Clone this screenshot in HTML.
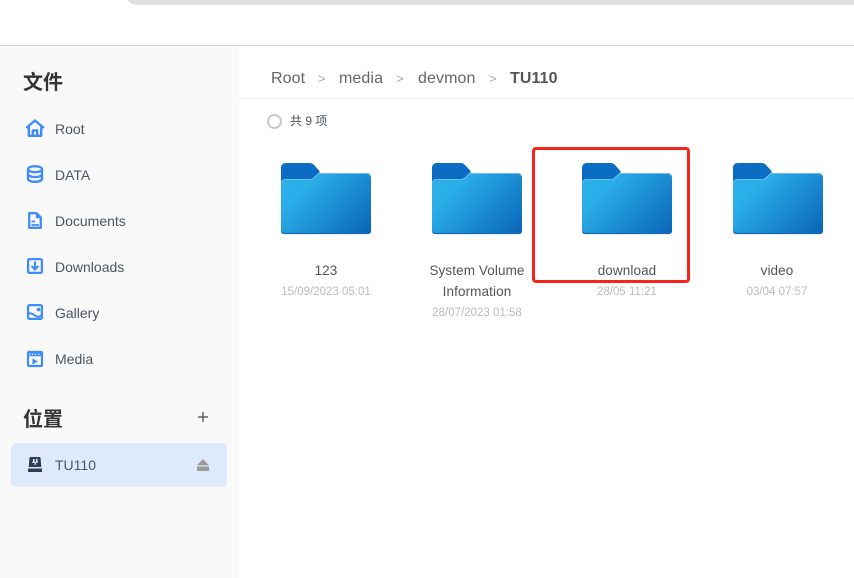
<!DOCTYPE html>
<html lang="zh">
<head>
<meta charset="utf-8">
<title>文件</title>
<style>
html,body{margin:0;padding:0;background:#fff}
body{width:854px;height:578px;overflow:hidden;position:relative;font-family:"Liberation Sans","Noto Sans CJK SC",sans-serif}
.a{position:absolute;white-space:nowrap}
.side{position:absolute;left:0;top:46px;width:239px;height:532px;background:#f9f9f9}
.h{font-size:20px;font-weight:700;color:#333;font-family:"Noto Sans CJK SC",sans-serif;line-height:26px;left:23px}
.nav{left:55px;font-size:14px;color:#4b5563;line-height:18px}
.ic{position:absolute;left:25px;width:20px;height:20px}
.bc{font-size:16px;letter-spacing:.1px;color:#666;line-height:20px;top:69px}
.sep{font-size:13px;color:#aaa;line-height:20px;top:69px}
.n{font-size:13.500px;letter-spacing:.1px;color:#555;line-height:21px;text-align:center;width:150px}
.t{font-size:11.500px;color:#bbb;line-height:16px;text-align:center;width:150px}
.f{position:absolute;top:163px;width:92px;height:72px}
</style>
</head>
<body>
<svg width="0" height="0" style="position:absolute">
<defs>
<linearGradient id="g" gradientUnits="userSpaceOnUse" x1="15" y1="32" x2="76" y2="92">
<stop offset="0" stop-color="#2bafe9"/><stop offset="1" stop-color="#0761b5"/>
</linearGradient>
<symbol id="folder" viewBox="0 0 92 72">
<path d="M1 4.500a4.500 4.500 0 0 1 4.500-4.500h24a6 6 0 0 1 4.500 2L39.500 8v11H1z" fill="#0a6cc2"/>
<path d="M39 10h48a4 4 0 0 1 4 4v54a3 3 0 0 1-3 3H4a3 3 0 0 1-3-3V20a4 4 0 0 1 4-4h25q2 0 3.500-1.300L37 11.500q1-1.500 2-1.500z" fill="url(#g)"/>
<path d="M1.500 20a4 4 0 0 1 3.500-3.500h25q2 0 3.500-1.300L37 12q1-1.500 2-1.500h48a4 4 0 0 1 3.500 3" fill="none" stroke="#6dbdec" stroke-width="1"/>
<path d="M1.500 68.500q.5 2 3 2h83q2.500 0 3-2" fill="none" stroke="#1468b8" stroke-width="1.200"/>
</symbol>
</defs>
</svg>

<!-- top -->
<div class="a" style="left:124px;top:-30px;width:760px;height:35px;background:#e0e0e0;border-radius:0 0 0 14px"></div>
<div class="a" style="left:0;top:45px;width:854px;height:1px;background:#d4d4d4"></div>

<div class="side"></div>
<div class="a h" style="top:68px">文件</div>

<svg class="ic" style="top:119px" viewBox="0 0 20 20" fill="none" stroke="#3f8cff" stroke-width="2.400" stroke-linejoin="round"><path d="M2 8.300 10 1.500l8 6.800h-1.800v8.500H3.800V8.300z"/><path d="M7.800 17v-5.500h4.400V17"/></svg>
<div class="a nav" style="top:120px">Root</div>

<svg class="ic" style="top:165px" viewBox="0 0 20 20" fill="none" stroke="#3f8cff" stroke-width="2.300"><ellipse cx="10" cy="4.200" rx="7" ry="3"/><path d="M3 4.200v9.600c0 1.700 3 3 7 3s7-1.300 7-3V4.200M3 9c0 1.700 3 3 7 3s7-1.300 7-3"/><path d="M3 13.800c0 1.700 3 3 7 3s7-1.300 7-3"/></svg>
<div class="a nav" style="top:166px">DATA</div>

<svg class="ic" style="top:211px" viewBox="0 0 20 20" fill="none" stroke="#3f8cff" stroke-width="2.300" stroke-linejoin="round"><path d="M4.200 2.200h7.300l4.300 4.300v10.300H4.200z"/><path d="M11.500 2v4.500H16" fill="#3f8cff" stroke-width="1.200"/><path d="M6.500 10.500h3.500M6.500 14h7.500" stroke-width="1.800"/></svg>
<div class="a nav" style="top:212px">Documents</div>

<svg class="ic" style="top:256px" viewBox="0 0 20 20" fill="none" stroke="#3f8cff" stroke-width="2.300"><rect x="3.100" y="3.100" width="13.800" height="13.800" rx="1.500"/><path d="M10 5.500v8M6.500 10l3.500 3.500 3.500-3.500" stroke-width="2.100"/></svg>
<div class="a nav" style="top:258px">Downloads</div>

<svg class="ic" style="top:302px" viewBox="0 0 20 20" fill="none" stroke="#3f8cff" stroke-width="2.300"><rect x="3.100" y="3.100" width="13.800" height="13.800" rx="1.500"/><path d="M3 12c3-1.500 5 0 7.500 1.800s4 1 6.500-.8" stroke-width="2"/><circle cx="13.500" cy="7.500" r="1.800" fill="#3f8cff" stroke="none"/></svg>
<div class="a nav" style="top:304px">Gallery</div>

<svg class="ic" style="top:349px" viewBox="0 0 20 20" fill="none" stroke="#3f8cff" stroke-width="2.200"><rect x="3" y="3" width="14" height="14" rx="1"/><path d="M2.500 5.500h15" stroke-width="3.400"/><path d="M4 5.300h12" stroke="#fff" stroke-width="1.100" stroke-dasharray="1.300 1.700"/><path d="M7.500 9.500v6l5.500-3z" fill="#3f8cff" stroke="none"/></svg>
<div class="a nav" style="top:350px">Media</div>

<div class="a h" style="top:405px">位置</div>
<svg class="a" style="left:197px;top:411px" width="12" height="12" viewBox="0 0 12 12"><path d="M6 1v10M1 6h10" stroke="#444" stroke-width="1.200"/></svg>

<div class="a" style="left:11px;top:443px;width:216px;height:44px;background:#deeafb;border-radius:5px"></div>
<svg class="a" style="left:27px;top:456px" width="16" height="16" viewBox="0 0 16 16"><path d="M2.500 2a1 1 0 0 1 1-1h9a1 1 0 0 1 1 1l.8 9H1.700z" fill="#2d3d55"/><path d="M6 3h1.500v3H6zM9 2.800h1.500V6H9zM5 5.800h6v1H5zM7.500 6.500h1.200v2.500H7.500z" fill="#e4edfb"/><path d="M1 12.500h14V16H1z" fill="#2d3d55"/></svg>
<div class="a nav" style="top:456px">TU110</div>
<svg class="a" style="left:197px;top:459px" width="12" height="12" viewBox="0 0 12 12"><path d="M6 0 12 6.300H0z" fill="#9a9a9a"/><rect x="0" y="7.500" width="12" height="4.500" rx=".5" fill="#9a9a9a"/></svg>

<!-- breadcrumb -->
<div class="a bc" style="left:271px">Root</div>
<div class="a sep" style="left:318px">&gt;</div>
<div class="a bc" style="left:339px">media</div>
<div class="a sep" style="left:396px">&gt;</div>
<div class="a bc" style="left:418px">devmon</div>
<div class="a sep" style="left:489px">&gt;</div>
<div class="a bc" style="left:510px;font-weight:700;color:#555">TU110</div>
<div class="a" style="left:239px;top:98px;width:615px;height:1px;background:#f0f0f0"></div>

<div class="a" style="left:267px;top:114px;width:11px;height:11px;border:2px solid #c8c8c8;border-radius:50%;background:#fff"></div>
<div class="a" style="left:290px;top:113px;font-size:12px;line-height:17px;color:#4b5563">共 9 项</div>

<!-- folders -->
<svg class="f" style="left:280px"><use href="#folder"/></svg>
<svg class="f" style="left:431px"><use href="#folder"/></svg>
<svg class="f" style="left:581px"><use href="#folder"/></svg>
<svg class="f" style="left:732px"><use href="#folder"/></svg>

<div class="a n" style="left:251px;top:260px">123</div>
<div class="a t" style="left:251px;top:284px">15/09/2023 05:01</div>

<div class="a n" style="left:402px;top:260px">System Volume<br>Information</div>
<div class="a t" style="left:402px;top:305px">28/07/2023 01:58</div>

<div class="a n" style="left:552px;top:260px">download</div>
<div class="a t" style="left:552px;top:284px">28/05 11:21</div>

<div class="a n" style="left:702px;top:260px">video</div>
<div class="a t" style="left:702px;top:284px">03/04 07:57</div>

<!-- annotation -->
<div class="a" style="left:532px;top:147px;width:152px;height:130px;border:3px solid #f9231c;border-radius:4px"></div>
</body>
</html>
